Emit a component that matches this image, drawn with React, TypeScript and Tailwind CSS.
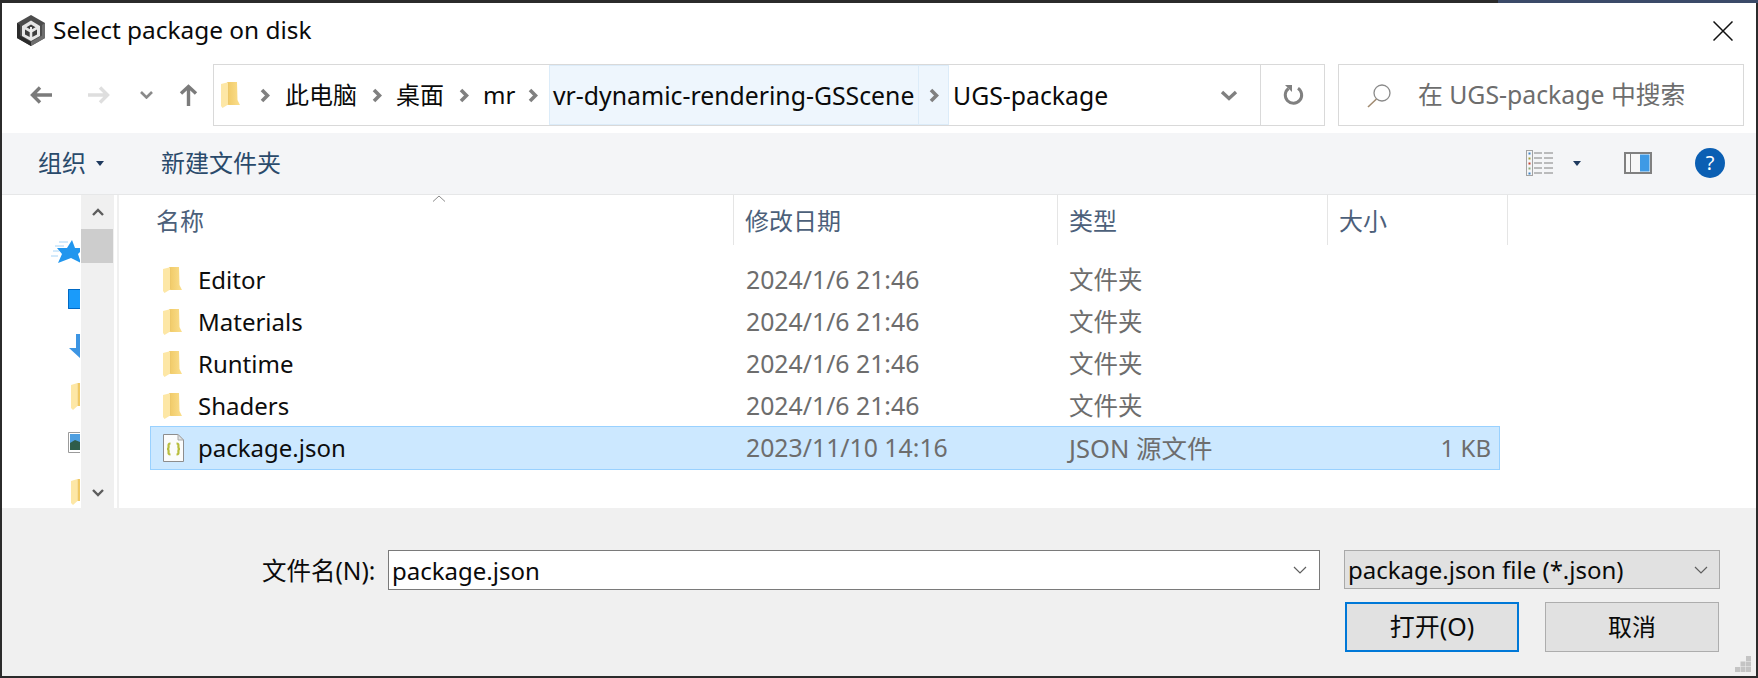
import React from "react";

const LATIN = "'Noto Sans','Noto Sans CJK SC',sans-serif";

function Folder({ className = "" }: { className?: string }) {
  return (
    <svg viewBox="0 0 19 26" className={"block " + className} width="19" height="26">
      <defs>
        <linearGradient id="folderBody" x1="0" y1="0" x2="1" y2="0">
          <stop offset="0" stopColor="#f0c965" />
          <stop offset="1" stopColor="#fbdf8e" />
        </linearGradient>
      </defs>
      <path d="M6 0H16L16.500 18L19 23H6Z" fill="url(#folderBody)" />
      <path d="M0 2L8 0V22L1.500 26L0 24Z" fill="#fde7a6" />
      <path d="M8 0V22L7 22.600V.3Z" fill="#edc86a" />
    </svg>
  );
}

function FileIcon() {
  return (
    <svg viewBox="0 0 21 28" width="21" height="28" className="block">
      <path d="M.5.5H15L20.5 6V27.5H.5Z" fill="#fbfcfc" stroke="#8d8d8d" />
      <path d="M15 .5V6H20.5Z" fill="#dfe3e3" stroke="#a9a9a9" />
      <path d="M7.500 9.500C5 9.500 5.600 11 5.600 13C5.600 14.600 5.200 15 4 15C5.200 15 5.600 15.400 5.600 17C5.600 19 5 20.500 7.500 20.500" fill="none" stroke="#b8bd3e" strokeWidth="2.200" />
      <path d="M13.500 9.500C16 9.500 15.400 11 15.400 13C15.400 14.600 15.800 15 17 15C15.800 15 15.400 15.400 15.400 17C15.400 19 16 20.500 13.500 20.500" fill="none" stroke="#b8bd3e" strokeWidth="2.200" />
    </svg>
  );
}

function Unity() {
  return (
    <svg viewBox="0 0 28 31" width="28" height="31" className="block">
      <path d="M14 0L28 8V23L14 31L0 23V8Z" fill="#4c4c4c" />
      <path d="M0 8V23L14 31L14 27L3 20.500V10Z" fill="#2b2b2b" />
      <path d="M28 23L14 31V27L25 20.500V10L28 8Z" fill="#6e6e6e" />
      <path d="M14 5.500L23 11V21L14 26L5 21V11Z" fill="#e6e6e6" />
      <path d="M14 9.500L18.500 12.200L14 14.800L9.500 12.200Z" fill="#3d3d3d" />
      <path d="M8 14.500L12.700 17.200V22L8 19.500Z" fill="#3d3d3d" />
      <path d="M20 14.500L15.300 17.200V22L20 19.500Z" fill="#3d3d3d" />
      <path d="M13 12H15V18H13Z" fill="#ececec" />
    </svg>
  );
}

function Crumb({ w, ml, children, latin }: { w: number; ml?: number; children: React.ReactNode; latin?: boolean }) {
  return (
    <span
      className={"block whitespace-nowrap leading-[30px] text-[#0a0a0a] " + (latin ? "text-[24.8px]" : "text-[24px]")}
      style={{ width: w, marginLeft: ml ?? 0, fontFamily: LATIN }}
    >
      {children}
    </span>
  );
}

function ChevR({ ml }: { ml: number }) {
  return (
    <svg viewBox="0 0 10 15" width="10" height="15" className="block shrink-0" style={{ marginLeft: ml }}>
      <path d="M2 2L7.500 7.500L2 13" fill="none" stroke="#808080" strokeWidth="3.600" />
    </svg>
  );
}

const rows = [
  ["Editor", "2024/1/6 21:46", "文件夹", ""],
  ["Materials", "2024/1/6 21:46", "文件夹", ""],
  ["Runtime", "2024/1/6 21:46", "文件夹", ""],
  ["Shaders", "2024/1/6 21:46", "文件夹", ""],
];

function Row({ name, date, type, size, selected }: { name: string; date: string; type: string; size: string; selected?: boolean }) {
  return (
    <div
      className={
        selected
          ? "ml-[31px] -mt-px flex h-[44px] w-[1350px] items-center border border-[#99d1ff] bg-[#cce8ff]"
          : "ml-[31px] flex h-[42px] w-[1350px] items-center border border-transparent"
      }
    >
      <div className="ml-[12px] w-[35px] shrink-0">{selected ? <FileIcon /> : <Folder />}</div>
      <div className="w-[548px] shrink-0 whitespace-nowrap text-[24px] text-[#0d0d0d]">{name}</div>
      <div className="w-[323px] shrink-0 whitespace-nowrap text-[24.8px] text-[#6d6d6d]">{date}</div>
      <div className={"w-[200px] shrink-0 whitespace-nowrap text-[#6d6d6d] " + (selected ? "text-[25.5px]" : "text-[24.5px]")}>{type}</div>
      <div className="w-[222px] shrink-0 whitespace-nowrap text-right text-[24px] text-[#6d6d6d]">{size}</div>
    </div>
  );
}

function HeaderCell({ w, children }: { w: number; children?: React.ReactNode }) {
  return (
    <div className="flex h-[50px] shrink-0 items-center border-r border-[#e5e5e5] pl-[11px] pt-[2px] text-[24px] text-[#4c607a]" style={{ width: w }}>
      {children}
    </div>
  );
}

function Combo({ className, text, chevronMr }: { className: string; text: string; chevronMr: number }) {
  return (
    <div className={"flex items-center justify-between " + className}>
      <span className="pl-[3px] pt-[1px] text-[24px] whitespace-nowrap text-[#0a0a0a]">{text}</span>
      <svg viewBox="0 0 14 8" width="14" height="8" className="block" style={{ marginRight: chevronMr }}>
        <path d="M1 1L7 7L13 1" fill="none" stroke="#5f5f5f" strokeWidth="1.200" />
      </svg>
    </div>
  );
}

export default function App() {
  return (
    <div className="relative h-[678px] w-[1758px] overflow-hidden bg-[#2b2b2b] px-[2px] pb-[2px] pt-[3px]" style={{ fontFamily: LATIN }}>
      <div className="absolute right-0 top-0 h-[3px] w-[260px] bg-[#3b4a68]" />
      <div className="flex h-[673px] flex-col bg-white">
        {/* Title bar */}
        <div className="flex h-[61px] shrink-0 items-center pb-[6px] pl-[15px]">
          <Unity />
          <span className="ml-[8px] whitespace-nowrap text-[24.4px] text-[#0a0a0a]">Select package on disk</span>
          <svg viewBox="0 0 20 20" width="20" height="20" className="ml-auto mr-[23px] block">
            <path d="M.5.5L19.500 19.500M19.500.5L.5 19.500" stroke="#111" strokeWidth="1.500" />
          </svg>
        </div>

        {/* Navigation bar */}
        <div className="flex h-[62px] shrink-0 items-center">
          <svg viewBox="0 0 22 18" width="22" height="18" className="ml-[28px] block">
            <path d="M22 9H3M10 1.500L2.500 9L10 16.500" fill="none" stroke="#7b7b7b" strokeWidth="3.400" />
          </svg>
          <svg viewBox="0 0 22 18" width="22" height="18" className="ml-[36px] block">
            <path d="M0 9H19M12 1.500L19.500 9L12 16.500" fill="none" stroke="#dedede" strokeWidth="3.400" />
          </svg>
          <svg viewBox="0 0 13 8" width="13" height="8" className="ml-[30px] block">
            <path d="M1 1L6.500 6.500L12 1" fill="none" stroke="#8a8a8a" strokeWidth="2.600" />
          </svg>
          <svg viewBox="0 0 19 22" width="19" height="22" className="ml-[26px] block">
            <path d="M9.500 22V3M2 9.500L9.500 2.500L17 9.500" fill="none" stroke="#7b7b7b" strokeWidth="3.400" />
          </svg>
          <div className="ml-[15px] flex h-[62px] w-[1112px] shrink-0 items-center border border-[#d9d9d9]">
            <Folder className="ml-[7px] shrink-0" />
            <ChevR ml={20} />
            <Crumb w={72} ml={15}>此电脑</Crumb>
            <ChevR ml={15} />
            <Crumb w={47} ml={14}>桌面</Crumb>
            <ChevR ml={16} />
            <Crumb w={29} ml={14}>mr</Crumb>
            <ChevR ml={16} />
            <div className="ml-[11px] flex h-[60px] w-[400px] shrink-0 items-center border border-[#dcecf9] bg-[#eef6fd]">
              <span className="w-[369px] shrink-0 whitespace-nowrap border-r border-[#dcecf9] pl-[3px] text-[24.8px] leading-[58px] text-[#0a0a0a]">vr-dynamic-rendering-GSScene</span>
              <ChevR ml={10} />
            </div>
            <Crumb w={160} ml={4} latin>UGS-package</Crumb>
            <svg viewBox="0 0 18 11" width="18" height="11" className="ml-[107px] block shrink-0">
              <path d="M2 2L9 8.500L16 2" fill="none" stroke="#808080" strokeWidth="3.400" />
            </svg>
            <div className="ml-[22px] flex h-[60px] flex-1 items-center justify-center border-l border-[#d9d9d9] pl-[2px]">
              <svg viewBox="0 0 21 22" width="21" height="22" className="block">
                <path d="M5.500 4.500A8.200 8.200 0 1 0 15 4.200" fill="none" stroke="#808080" strokeWidth="3" />
                <path d="M2 1H9V8Z" fill="#808080" />
              </svg>
            </div>
          </div>
          <div className="ml-[13px] flex h-[62px] w-[406px] shrink-0 items-center border border-[#d9d9d9]">
            <svg viewBox="0 0 25 25" width="25" height="25" className="ml-[28px] block shrink-0">
              <circle cx="15" cy="10" r="8" fill="none" stroke="#8a8a8a" strokeWidth="1.300" />
              <path d="M9.500 16L1 24" stroke="#a08a70" strokeWidth="1.600" />
            </svg>
            <span className="ml-[26px] whitespace-nowrap text-[24.8px] text-[#6d6d6d]">在 UGS-package 中搜索</span>
          </div>
        </div>

        <div className="h-[7px] shrink-0" />

        {/* Toolbar */}
        <div className="flex h-[62px] shrink-0 items-center border-b border-[#e6e7e8] bg-[#f4f5f7] pb-[1px] text-[#2a4a6b]">
          <span className="ml-[36px] text-[24px]">组织</span>
          <svg viewBox="0 0 8 5" width="8" height="5" className="ml-[10px] block">
            <path d="M0 0H8L4 5Z" fill="#1f3a5f" />
          </svg>
          <span className="ml-[57px] text-[24px]">新建文件夹</span>
          <svg viewBox="0 0 28 26" width="28" height="26" className="ml-auto block shrink-0">
            <rect x=".5" y=".5" width="6" height="25" fill="#f4f5f7" stroke="#a3a3a3" />
            <rect x="2.500" y="2.500" width="2" height="2" fill="#3d83c4" />
            <rect x="2.500" y="7.500" width="2" height="2" fill="#a3a13b" />
            <rect x="2.500" y="12.500" width="2" height="2" fill="#c2402f" />
            <rect x="2.500" y="17.500" width="2" height="2" fill="#8cab7a" />
            <rect x="2.500" y="22.500" width="2" height="2" fill="#3d83c4" />
            <path d="M8 3H16M18 3H27M8 8H16M18 8H27M8 13H16M18 13H27M8 18H16M18 18H27M8 23H16M18 23H27" stroke="#808080" strokeWidth="1" />
          </svg>
          <svg viewBox="0 0 8 5" width="8" height="5" className="ml-[19px] block shrink-0">
            <path d="M0 0H8L4 5Z" fill="#1f3a5f" />
          </svg>
          <svg viewBox="0 0 28 22" width="28" height="22" className="ml-[43px] block shrink-0">
            <rect x="1" y="1" width="26" height="20" fill="#f7f7f7" stroke="#808080" strokeWidth="2" />
            <path d="M6.500 1V21" stroke="#808080" strokeWidth="1" />
            <rect x="16" y="2.500" width="9.500" height="17" fill="#3f9ae5" />
          </svg>
          <svg viewBox="0 0 30 30" width="30" height="30" className="ml-[43px] mr-[31px] block shrink-0">
            <circle cx="15" cy="15" r="15" fill="#0b5fb3" />
            <text x="15" y="22" textAnchor="middle" fontSize="20" fill="#ffffff" fontFamily="'Noto Sans',sans-serif">?</text>
          </svg>
        </div>

        {/* Body */}
        <div className="relative flex h-[313px] shrink-0">
          {/* Navigation pane */}
          <div className="h-full w-[79px] shrink-0 overflow-hidden">
            <div className="ml-[49px] mt-[45px] flex flex-col">
              <svg viewBox="0 0 29 24" width="29" height="24" className="block">
                <path d="M21 0L24 8L33 8L27 14L30 23L20 18L7 23L11 14L6 8L16 8Z" fill="#2196ee" />
                <path d="M4 6H13M2 11H8M0 16H7M8 2H17" stroke="#a6d4f7" strokeWidth="1" />
              </svg>
              <div className="ml-[17px] mt-[25px] h-[20px] w-[12px] rounded-l-[1px] border border-r-0 border-[#0069c4] bg-[#1a9bfa]" />
              <svg viewBox="0 0 11 24" width="11" height="24" className="ml-[18px] mt-[25px] block">
                <path d="M7 0H11V24L0 14H7Z" fill="#3d95e3" />
              </svg>
              <svg viewBox="0 0 9 27" width="9" height="27" className="ml-[20px] mt-[25px] block">
                <path d="M0 2L6.500 0V23L2 27L0 25Z" fill="#fde7a6" />
                <path d="M6.500 0H9V23H6.500Z" fill="#f0c965" />
              </svg>
              <svg viewBox="0 0 12 21" width="12" height="21" className="ml-[17px] mt-[22px] block">
                <path d="M12 .5H.5V20.500H12" fill="#fff" stroke="#9b9b9b" />
                <rect x="2" y="2" width="10" height="9" fill="#4f9fe0" />
                <path d="M2 18V11L7 8L12 10V18Z" fill="#2e5c4a" />
              </svg>
              <svg viewBox="0 0 9 26" width="9" height="26" className="ml-[20px] mt-[26px] block">
                <path d="M0 2L6.500 0V22L2 26L0 24Z" fill="#fde7a6" />
                <path d="M6.500 0H9V22H6.500Z" fill="#f0c965" />
              </svg>
            </div>
          </div>
          {/* Scrollbar */}
          <div className="flex h-full w-[33px] shrink-0 flex-col bg-[#f0f0f0]">
            <div className="flex h-[34px] items-center justify-center">
              <svg viewBox="0 0 12 8" width="12" height="8" className="block"><path d="M1 7L6 2L11 7" fill="none" stroke="#5d5d5d" strokeWidth="2.400" /></svg>
            </div>
            <div className="h-[34px] w-[32px] bg-[#cdcdcd]" />
            <div className="flex flex-1 items-end justify-center pb-[11px]">
              <svg viewBox="0 0 12 8" width="12" height="8" className="block"><path d="M1 1L6 6L11 1" fill="none" stroke="#5d5d5d" strokeWidth="2.400" /></svg>
            </div>
          </div>
          <div className="ml-[3px] h-full w-[2px] shrink-0 bg-[#f0f0f0]" />
          {/* File list */}
          <div className="relative min-w-0 flex-1">
            <svg viewBox="0 0 14 7" width="14" height="7" className="absolute left-[313px] top-0 block">
              <path d="M1 6.500L7 1L13 6.500" fill="none" stroke="#8a8a8a" strokeWidth="1" />
            </svg>
            <div className="flex h-[50px]">
              <HeaderCell w={615}><span className="ml-[26px]">名称</span></HeaderCell>
              <HeaderCell w={324}>修改日期</HeaderCell>
              <HeaderCell w={270}>类型</HeaderCell>
              <HeaderCell w={180}>大小</HeaderCell>
            </div>
            <div className="mt-[14px] flex flex-col">
              {rows.map((r) => (
                <Row key={r[0]} name={r[0]} date={r[1]} type={r[2]} size={r[3]} />
              ))}
              <Row name="package.json" date="2023/11/10 14:16" type="JSON 源文件" size="1 KB" selected />
            </div>
          </div>
        </div>

        {/* Bottom panel */}
        <div className="relative flex flex-1 flex-col bg-[#f0f0f0]">
          <div className="mt-[42px] flex items-start">
            <span className="ml-[260px] w-[126px] whitespace-nowrap pt-[1px] text-[24.5px] leading-[40px] text-[#0a0a0a]">文件名(N):</span>
            <Combo className="h-[40px] w-[932px] border border-[#7a7a7a] bg-white" text="package.json" chevronMr={12} />
            <Combo className="ml-[24px] h-[39px] w-[376px] border border-[#a9a9a9] bg-[#e1e1e1]" text="package.json file (*.json)" chevronMr={11} />
          </div>
          <div className="mt-[11px] flex">
            <div className="ml-[1343px] flex h-[50px] w-[174px] items-center justify-center border-2 border-[#0078d7] bg-[#e1e1e1] text-[25px] text-[#0a0a0a]">打开(O)</div>
            <div className="ml-[26px] flex h-[50px] w-[174px] items-center justify-center border border-[#adadad] bg-[#e1e1e1] text-[24px] text-[#0a0a0a]">取消</div>
          </div>
          <svg viewBox="0 0 17 16" width="17" height="16" className="absolute bottom-[4px] right-[4px] block">
            <path d="M11 0h5v5h-5zM5.500 5.500h5v5h-5zM11 5.500h5v5h-5zM0 11h5v5h-5zM5.500 11h5v5h-5zM11 11h5v5h-5z" fill="#c4c4c4" />
          </svg>
        </div>
      </div>
    </div>
  );
}
